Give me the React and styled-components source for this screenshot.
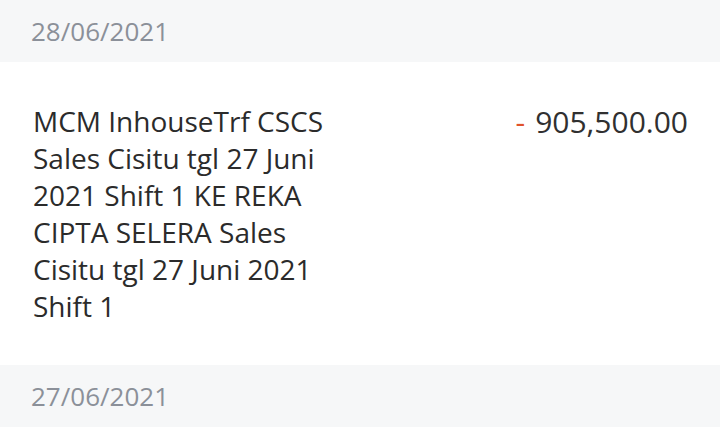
import React from 'react';
import styled, { createGlobalStyle } from 'styled-components';

const GlobalStyle = createGlobalStyle`
    body {
        margin: 0;
        background: #ffffff;
        font-family: "Open Sans", "Noto Sans", sans-serif;
    }
`;

const transactions = [
    {
        date: '28/06/2021',
        items: [
            {
                description: 'MCM InhouseTrf CSCS Sales Cisitu tgl 27 Juni 2021 Shift 1 KE REKA CIPTA SELERA Sales Cisitu tgl 27 Juni 2021 Shift 1',
                amount: '905,500.00',
                debit: true
            }
        ]
    },
    { date: '27/06/2021', items: [] }
];

export default function App() {
    return (
        <>
            <GlobalStyle />
            <List>
                {transactions.map((group) => (
                    <Group key={group.date}>
                        <DateHeader>{group.date}</DateHeader>
                        {group.items.map((item, i) => (
                            <Row key={i}>
                                <Description>{item.description}</Description>
                                <Amount>
                                    {item.debit && <Sign>-</Sign>}
                                    {item.amount}
                                </Amount>
                            </Row>
                        ))}
                    </Group>
                ))}
            </List>
        </>
    );
}

const List = styled.div`
    display: flex;
    flex-direction: column;
`;

const Group = styled.div`
    display: flex;
    flex-direction: column;
`;

const DateHeader = styled.div`
    height: 62px;
    display: flex;
    align-items: center;
    padding-left: 31px;
    background-color: #f6f7f8;
    color: #8b9099;
    font-size: 26px;
`;

const Row = styled.div`
    display: flex;
    justify-content: space-between;
    align-items: flex-start;
    padding: 41px 32px 40px 33px;
    color: #2b2b2b;
    font-size: 28px;
    line-height: 37px;
`;

const Description = styled.div`
    width: 320px;
`;

const Amount = styled.div`
    white-space: nowrap;
    font-size: 30px;
    color: #303030;
`;

const Sign = styled.span`
    color: #e0532b;
    margin-right: 10px;
`;
